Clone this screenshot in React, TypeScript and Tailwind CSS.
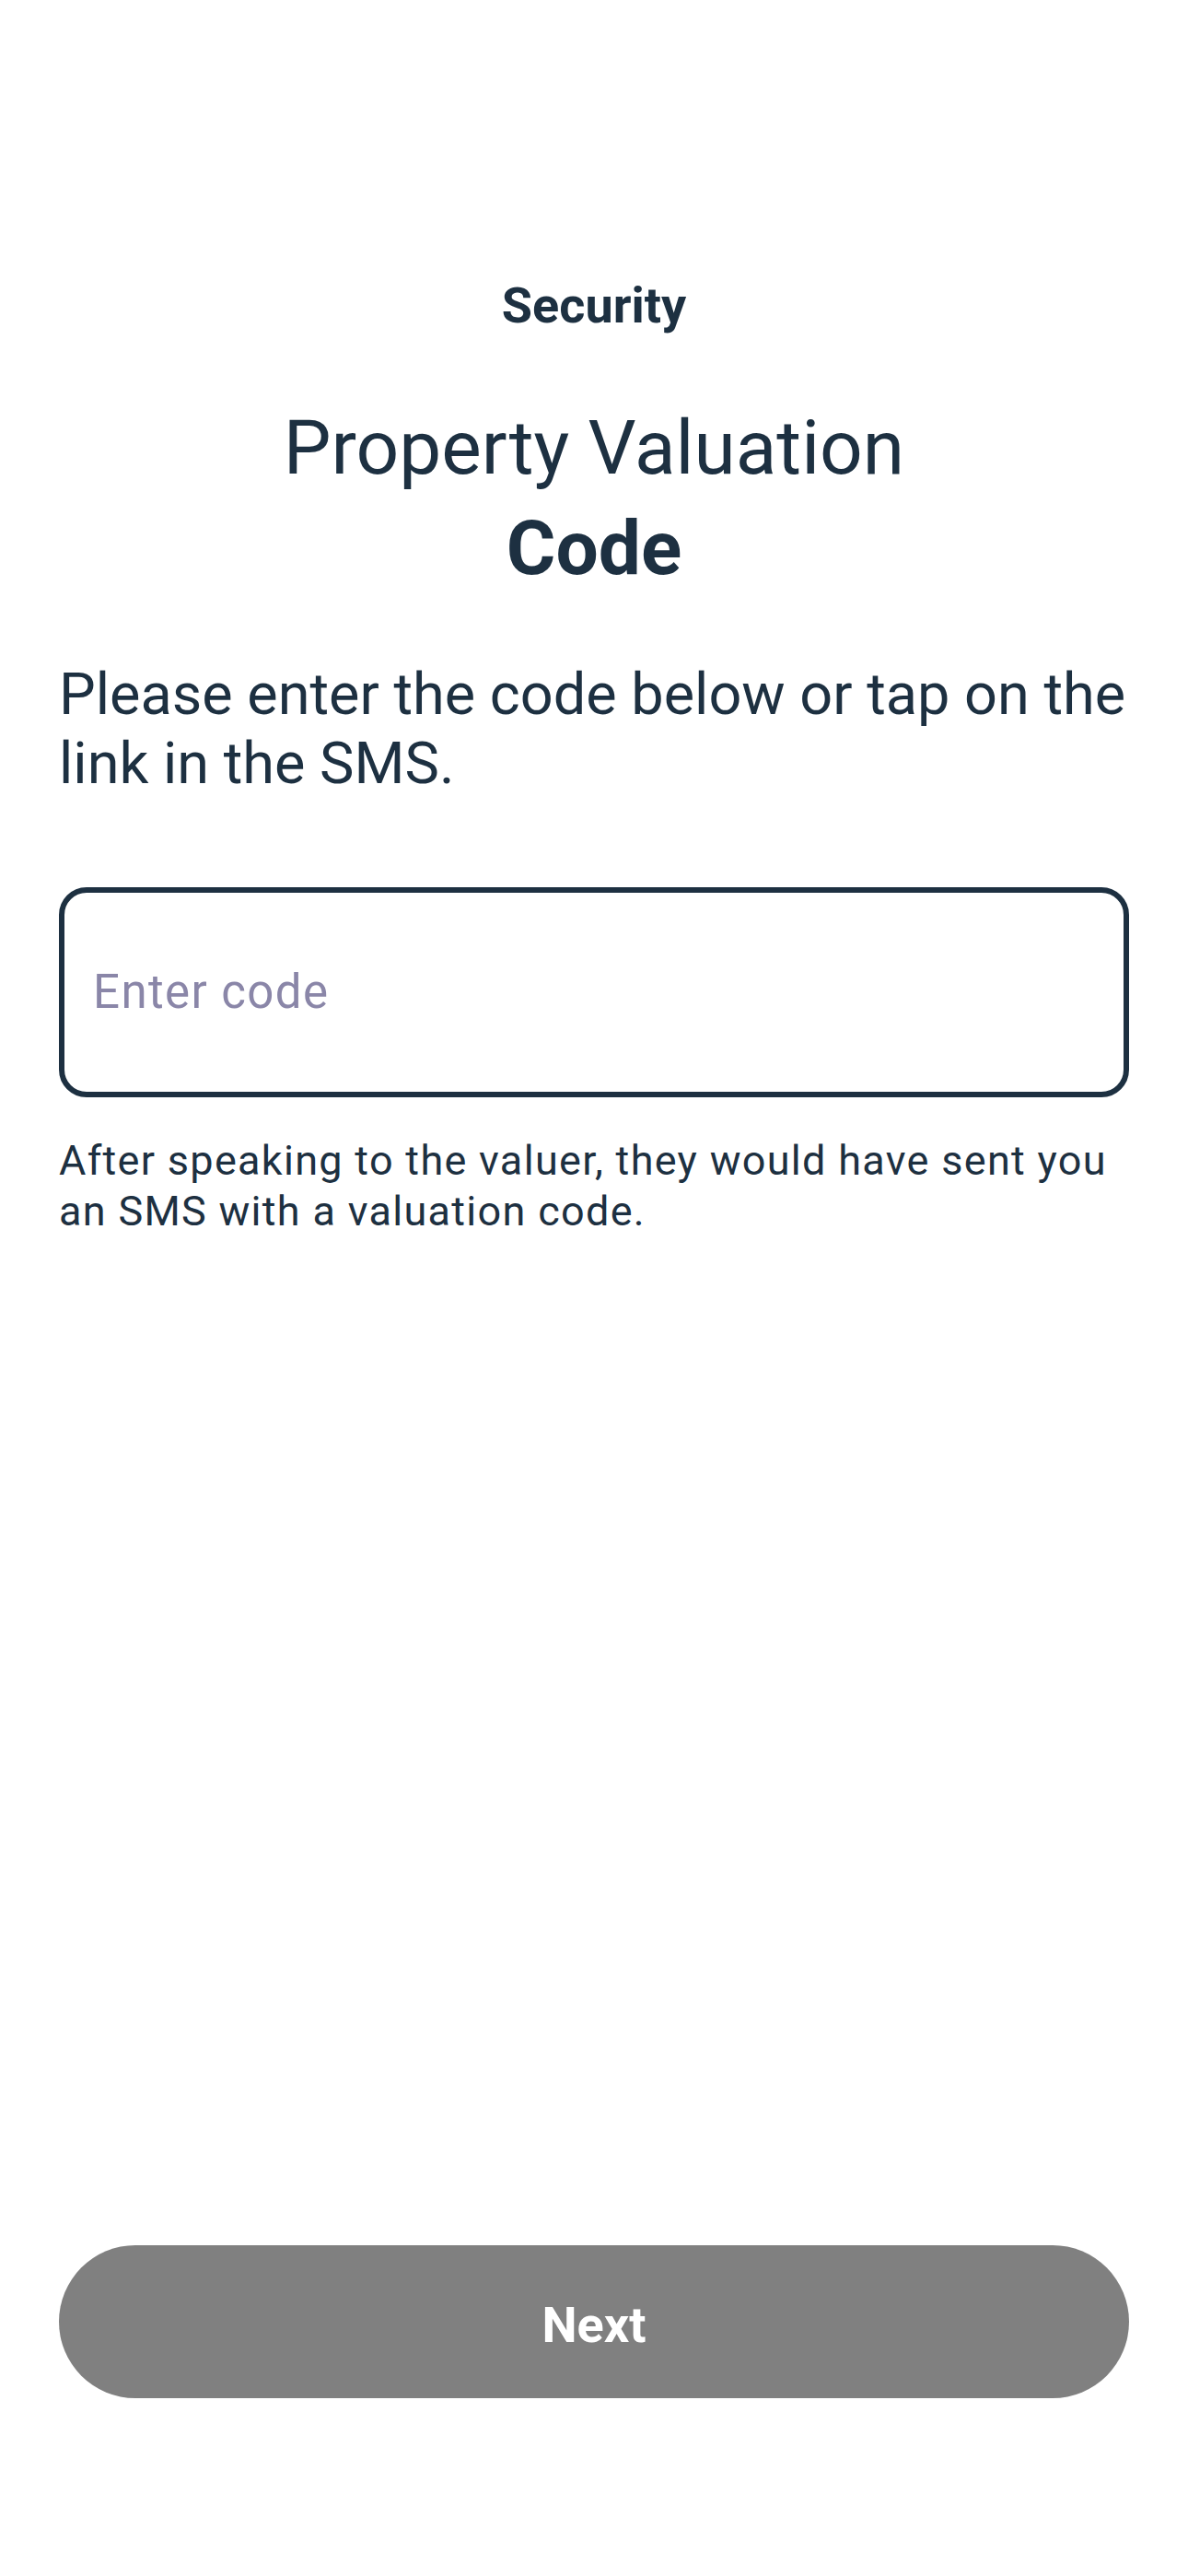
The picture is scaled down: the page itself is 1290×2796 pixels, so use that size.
import React from "react";

export default function App() {
  return (
    <div
      className="flex h-[2796px] w-[1290px] flex-col bg-white px-[64px] text-[#1d3041]"
      style={{ fontFamily: "Roboto, 'Noto Sans', sans-serif" }}
    >
      <div className="pt-[300px] text-center text-[54px] font-bold leading-[64px]">
        Security
      </div>

      <h1 className="mt-[68px] text-center text-[82px] leading-[109px]">
        <span className="block font-normal">Property Valuation</span>
        <span className="block font-bold">Code</span>
      </h1>

      <p className="mt-[66px] text-[63px] leading-[75px]">
        Please enter the code below or tap on the link in the SMS.
      </p>

      <div className="mt-[97px] flex h-[228px] items-center rounded-[30px] border-[6px] border-[#1d3041] px-[31px]">
        <input
          type="text"
          placeholder="Enter code"
          className="w-full bg-transparent text-[51px] leading-[60px] tracking-[1.4px] text-[#1d3041] outline-none placeholder:text-[#8a86a8]"
          style={{ fontFamily: "Roboto, 'Noto Sans', sans-serif" }}
        />
      </div>

      <p className="mt-[41px] text-[45px] leading-[55px] tracking-[1.3px]">
        After speaking to the valuer, they would have sent you an SMS with a
        valuation code.
      </p>

      <div className="flex-1" />

      <button
        type="button"
        className="mb-[193px] flex h-[166px] w-full items-center justify-center rounded-full bg-[#808080] pt-[7px] text-[54px] font-bold leading-[64px] text-white"
        style={{ fontFamily: "Roboto, 'Noto Sans', sans-serif" }}
      >
        Next
      </button>
    </div>
  );
}
